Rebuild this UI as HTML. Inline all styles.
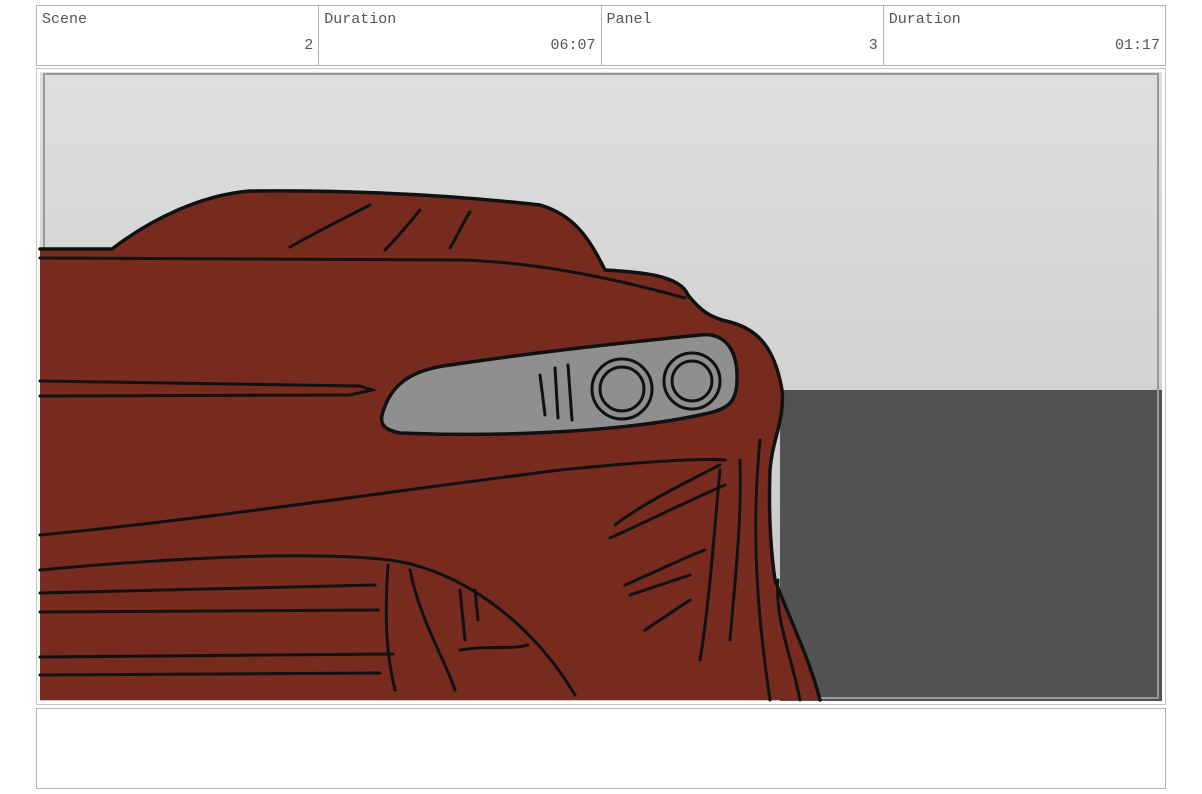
<!DOCTYPE html>
<html><head><style>
body{margin:0;width:1202px;height:794px;background:#fff;position:relative;overflow:hidden;font-family:"Courier New","Liberation Mono",monospace;}
.hdr{position:absolute;left:36px;top:5px;width:1128px;height:59px;border:1px solid #b4b4b4;display:flex;}
.c{flex:1;border-right:1px solid #b4b4b4;position:relative;font-size:15px;color:#555;}
.c:last-child{border-right:none}
.c .l{position:absolute;left:5px;top:5px}
.c .v{position:absolute;right:5px;top:31px}
.frame{position:absolute;left:36px;top:68px;width:1128px;height:635px;border:1px solid #c4c4c4;}
.bot{position:absolute;left:36px;top:708px;width:1128px;height:79px;border:1px solid #b4b4b4;}
</style></head><body>
<div class="hdr">
<div class="c"><span class="l">Scene</span><span class="v">2</span></div>
<div class="c"><span class="l">Duration</span><span class="v">06:07</span></div>
<div class="c"><span class="l">Panel</span><span class="v">3</span></div>
<div class="c"><span class="l">Duration</span><span class="v">01:17</span></div>
</div>
<div class="frame"></div>
<svg style="position:absolute;left:0;top:0" width="1202" height="794">
<defs><linearGradient id="g" x1="0" y1="0" x2="0" y2="1"><stop offset="0" stop-color="#dedede"/><stop offset="1" stop-color="#c6c6c6"/></linearGradient></defs>
<rect x="40" y="72" width="1122" height="629" fill="url(#g)"/>
<rect x="780" y="390" width="382" height="311" fill="#525252"/>
<rect x="44" y="74" width="1114" height="624" fill="none" stroke="#999" stroke-width="2"/>
<path d="M40 249 L112 249 C150 220 200 195 250 191 C350 190 450 195 540 205 C575 215 590 240 605 270 C640 272 680 275 688 295 C700 310 710 318 730 322 C760 330 775 350 782 390 C785 420 772 440 770 470 C768 520 772 560 775 580 C790 620 810 660 820 700 L40 700 Z" fill="#772b1f"/>
<g stroke="#111" stroke-width="3.5" fill="none" stroke-linejoin="round" stroke-linecap="round">
<path d="M40 249 L112 249 C150 220 200 195 250 191 C350 190 450 195 540 205 C575 215 590 240 605 270 C640 272 680 275 688 295 C700 310 710 318 730 322 C760 330 775 350 782 390 C785 420 772 440 770 470 C768 520 772 560 775 580 C790 620 810 660 820 700"/>
<path d="M382 415 C390 385 410 370 450 365 C550 350 650 340 700 335 C725 332 738 350 737 380 C737 405 725 410 700 415 C620 432 500 437 400 433 C385 430 380 425 382 415 Z" fill="#8f8f8f"/>
</g>
<g stroke="#111" stroke-width="3" fill="none" stroke-linecap="round">
<circle cx="622" cy="389" r="30"/><circle cx="622" cy="389" r="22"/>
<circle cx="692" cy="381" r="28"/><circle cx="692" cy="381" r="20"/>
<path d="M40 381 L360 386 L372 390 L350 395 L40 396"/>
<path d="M40 258 L460 260 C540 262 620 280 685 298"/>
<path d="M290 247 C320 230 345 218 370 205"/><path d="M385 250 C400 235 410 222 420 210"/><path d="M450 248 C458 235 463 222 470 212"/>
<path d="M40 535 C200 520 400 490 560 470 C640 462 700 458 725 460"/>
<path d="M40 570 C150 560 300 550 390 560 C460 570 530 620 575 695"/>
<path d="M40 593 L375 585"/><path d="M40 612 L378 610"/><path d="M40 657 L393 654"/><path d="M40 675 L380 673"/>
<path d="M388 565 C385 610 385 650 395 690"/><path d="M410 570 C420 620 445 660 455 690"/>
<path d="M460 590 L465 640"/><path d="M475 590 L478 620"/><path d="M460 650 C490 645 510 650 528 645"/>
<path d="M540 375 L545 415"/><path d="M555 368 L558 418"/><path d="M568 365 L572 420"/>
<path d="M610 538 C650 520 690 500 725 485"/><path d="M615 525 C640 505 690 480 720 465"/>
<path d="M625 585 C660 570 690 555 705 550"/><path d="M630 595 L690 575"/><path d="M645 630 L690 600"/>
<path d="M720 470 C715 520 710 600 700 660"/><path d="M740 460 C742 520 735 580 730 640"/>
<path d="M760 440 C752 520 755 600 770 700"/><path d="M778 580 C775 620 790 650 800 700"/>
</g>
</svg>
<div class="bot"></div>
</body></html>
